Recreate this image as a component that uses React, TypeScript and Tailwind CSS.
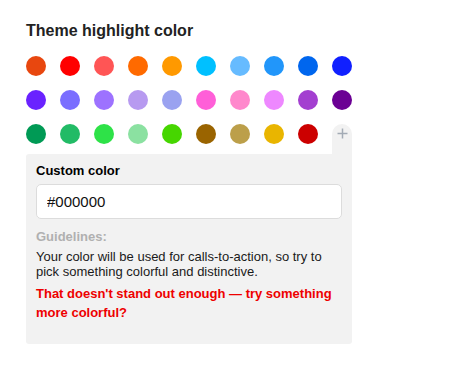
import React, { useState } from 'react'

const SWATCHES = [
  '#e8470f', '#ff0000', '#ff5555', '#ff6a00', '#ff9900', '#00c0ff', '#66bbff', '#2196fa', '#0066ee', '#1020ff',
  '#6a22ff', '#7a6eff', '#9d72ff', '#b79af0', '#9aa2f0', '#ff5fd8', '#ff88cc', '#ee88ff', '#a33fd0', '#6b0094',
  '#009a55', '#22bb66', '#2ee248', '#8be1a1', '#46d600', '#9a6400', '#bc9f4a', '#e9b500', '#cc0000',
]

export default function App() {
  const [custom, setCustom] = useState('#000000')

  return (
    <div className="min-h-screen bg-white font-['Liberation_Sans',Arial,sans-serif]">
      <div className="w-[326px] ml-[26px] pt-[21px]">
        <h2 className="text-[16px] leading-[20px] font-bold text-[#222]">Theme highlight color</h2>

        <div className="mt-[15px] grid grid-cols-[repeat(10,20px)] gap-[14px] items-start">
          {SWATCHES.map((c) => (
            <button
              key={c}
              className="w-5 h-5 rounded-full"
              style={{ backgroundColor: c }}
              aria-label={c}
            />
          ))}
          {/* add-custom tab, joins the panel below */}
          <div className="w-5 h-[30px] rounded-t-full bg-[#f2f2f2] flex justify-center pt-[4px]">
            <svg width="11" height="11" viewBox="0 0 11 11">
              <path d="M5.5 0.5v10M0.5 5.5h10" stroke="#a3abb5" strokeWidth="1.5" />
            </svg>
          </div>
        </div>

        <div className="bg-[#f2f2f2] rounded-[3px] rounded-tr-none px-[10px] pt-[9px] pb-[22px]">
          <div className="text-[13px] leading-[16px] font-bold text-black">Custom color</div>
          <input
            value={custom}
            onChange={(e) => setCustom(e.target.value)}
            className="mt-[5px] w-full h-[35px] bg-white border border-[#dcdcdc] rounded-[5px] px-[10px] text-[15px] text-[#111] outline-none"
          />
          <div className="mt-[10px] text-[13px] leading-[16px] font-bold text-[#b0b0b0]">Guidelines:</div>
          <p className="mt-[4px] text-[13px] leading-[15px] text-[#1a1a1a]">
            Your color will be used for calls-to-action, so try to pick something colorful and distinctive.
          </p>
          <p className="mt-[5px] text-[13px] leading-[19px] font-bold text-[#ee0000]">
            That doesn't stand out enough — try something more colorful?
          </p>
        </div>
      </div>
    </div>
  )
}
